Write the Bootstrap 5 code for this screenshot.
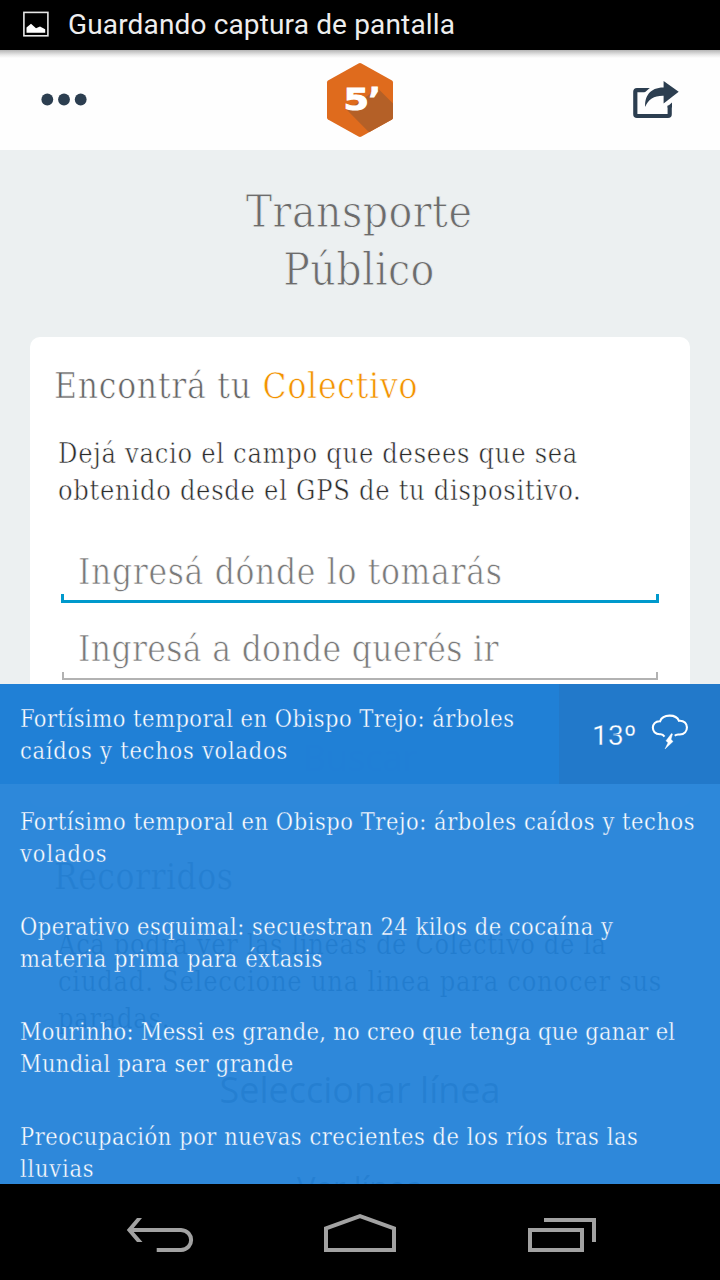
<!DOCTYPE html>
<html lang="es">
<head>
<meta charset="utf-8">
<meta name="viewport" content="width=device-width, initial-scale=1">
<title>Transporte Público</title>
<link rel="stylesheet" href="https://cdn.jsdelivr.net/npm/bootstrap@5.3.0/dist/css/bootstrap.min.css">
<style>
  body { background: #000; font-family: "DejaVu Serif Condensed", "DejaVu Serif", serif; }
  .phone { width: 720px; height: 1280px; }
  .status-bar { height: 50px; background: #000; color: #eee; font: 28px/50px Roboto, sans-serif; padding-left: 22px; letter-spacing: .15px; }
  .app-header { height: 100px; background: linear-gradient(#b4b4b4, #e9e9e9 5px, #fefefe 8px); }
  .app-view { background: #ecf0f1; min-height: 0; }
  /* --t is the tracking of a line; the outline in the ground colour gives a light weight */
  .ln { display: block; white-space: nowrap; letter-spacing: var(--t, 0); }
  .page-title { padding: 33px 2px 38px 0; font-size: 44px; line-height: 58px; color: #6c6c6c; font-weight: 400; -webkit-text-stroke: .8px #ecf0f1; }
  .panel-card { margin: 0 30px 20px; padding: 30px 24px 0; border-radius: 10px; background: #fff; }
  .first-card { height: 470px; }
  .card-heading { font-size: 35px; line-height: 39px; margin: 0 0 29px; color: #666; font-weight: 400; -webkit-text-stroke: .6px #fff; }
  .accent { color: #f39200; }
  .card-copy { font-size: 27px; line-height: 37px; margin: 0 0 34px 4px; color: #2c2c2c; -webkit-text-stroke: .5px #fff; }
  .route-card .card-heading, .route-card .card-copy { -webkit-text-stroke-width: .2px; position: relative; top: 1px; }
  .field { position: relative; height: 60px; margin: 0 7px 17px; padding-left: 17px; font-size: 35px; line-height: 58px; color: #7a7a7a; -webkit-text-stroke: .6px #fff; }
  .field::after { content: ""; position: absolute; inset: auto 0 0; height: 9px; border: solid #0099cc; border-width: 0 3px 3px; }
  .field.idle { line-height: 59px; }
  .field.idle::after { border-color: #b2b2b2; border-width: 0 2px 2px; inset: auto 1px 0; height: 8px; }
  .form-action { font: 36px/50px "Open Sans", sans-serif; color: #666; }
  .form-action.small-action { font-size: 31px; }
  .news-panel { position: absolute; left: 0; right: 0; bottom: 96px; height: 500px; overflow: hidden; background: rgba(34,129,216,.945); color: #fff; font-size: 23.4px; line-height: 32px; -webkit-text-stroke: .35px #2e88da; }
  .news-top { height: 100px; background: rgba(32,127,214,.92); -webkit-text-stroke-color: #2180d7; }
  .news-top .headline { padding: 19px 0 0 20px; }
  .weather { width: 161px; background: #2279ca; font: 28px/100px Roboto, sans-serif; padding-left: 33px; -webkit-text-stroke: .3px #2279ca; }
  .weather .ln { padding-top: 3px; }
  .news-list { padding: 22px 0 0 20px; }
  .news-list li { margin-bottom: 41px; }
  .system-nav { height: 96px; background: #000; }
</style>
</head>
<body>
<div class="phone position-relative overflow-hidden d-flex flex-column">
  <div class="status-bar d-flex align-items-center flex-shrink-0">
    <svg width="28" height="28" viewBox="0 0 28 28"><rect x="1.9" y="1.4" width="24" height="23.4" fill="none" stroke="#e8e8e8" stroke-width="1.6"/><path d="M4.500 21.800v-5.300l4.500-3.800 5 4.600 4-1.800 5.200 2.800v3.500z" fill="#fff"/></svg>
    <span style="margin-left:18px">Guardando captura de pantalla</span>
  </div>

  <header class="app-header flex-shrink-0">
    <svg class="d-block" width="720" height="100" viewBox="0 50 720 100">
      <g fill="#2c3e50"><circle cx="47.300" cy="99.500" r="5.900"/><circle cx="64" cy="99.500" r="5.900"/><circle cx="80.700" cy="99.500" r="5.900"/></g>
      <path d="M358.500 63.400Q360 62.600 361.500 63.400L392 80.500Q393 81.200 393 82.500V117.500Q393 118.800 392 119.500L361.500 136.600Q360 137.400 358.500 136.600L328 119.500Q327 118.800 327 117.500V82.500Q327 81.200 328 80.500Z" fill="#df6b1d"/>
      <path d="M347 110 369 132.300 392 119.500Q393 118.800 393 117.500V103.500L377.500 88 362 100Z" fill="#b46027"/>
      <g fill="#fff" stroke="#fff" stroke-width="1" font-family="DejaVu Sans" font-weight="700" font-size="31"><text x="343.500" y="109.500" textLength="25.500" lengthAdjust="spacingAndGlyphs">5</text><text x="368.500" y="110" font-size="32">’</text></g>
      <path d="M651 90.100H637Q635.300 90.100 635.300 91.800V114.300Q635.300 116 637 116H668Q669.700 116 669.700 114.300V105.500" fill="none" stroke="#2c3e50" stroke-width="4.200"/>
      <path d="M667.500 107.500V106.500L672 102.500V107.500Z" fill="#2c3e50"/>
      <path d="M643.500 93.500 649.800 88 653 88 653 93.500Z" fill="#fefefe"/>
      <path d="M663.600 81 678.700 91.700 663.600 103.500V95.800C654 95.600 648.500 99 645.200 107 644.500 96.500 650 87.500 663.600 87.600Z" fill="#2c3e50"/>
    </svg>
  </header>

  <main class="app-view flex-grow-1 overflow-hidden">
    <h1 class="page-title text-center m-0">
      <span class="ln" style="--t:.45px">Transporte</span>
      <span class="ln" style="--t:.4px">Público</span>
    </h1>
    <section class="panel-card first-card">
      <h2 class="card-heading ln" style="--t:.75px">Encontrá tu <span class="accent">Colectivo</span></h2>
      <p class="card-copy"><span class="ln" style="--t:.7px">Dejá vacio el campo que desees que sea</span><span class="ln" style="--t:.7px">obtenido desde el GPS de tu dispositivo.</span></p>
      <div class="field ln" style="--t:.65px">Ingresá dónde lo tomarás</div>
      <div class="field idle ln" style="--t:.34px">Ingresá a donde querés ir</div>
      <div class="form-action text-center" style="padding-top:36px">Buscar</div>
    </section>
    <section class="panel-card route-card">
      <h2 class="card-heading ln" style="--t:.5px">Recorridos</h2>
      <p class="card-copy"><span class="ln" style="--t:.6px">Acá podrá ver las líneas de Colectivo de la</span><span class="ln" style="--t:.76px">ciudad. Seleccione una linea para conocer sus</span><span class="ln" style="--t:.74px">paradas.</span></p>
      <div class="form-action text-center" style="padding-bottom:47px;margin-top:-5px">Seleccionar línea</div>
      <div class="form-action small-action text-center">Ver línea</div>
    </section>
  </main>

  <aside class="news-panel">
    <div class="news-top d-flex justify-content-between">
      <div class="headline"><span class="ln" style="--t:.5px">Fortísimo temporal en Obispo Trejo: árboles</span><span class="ln" style="--t:.77px">caídos y techos volados</span></div>
      <div class="weather d-flex align-items-center"><span class="ln" style="--t:.2px">13º</span>
        <svg style="margin-left:13px" width="40" height="100" viewBox="650 684 40 100"><path d="M664.500 736.500C662.500 733.800 662 734.300 659.800 734.300 650.500 734.300 650.500 720.800 660 721.300 663 713.800 676 713.800 679 720.800 689.500 719.800 689.500 734.800 679.500 734.500 677.500 734.500 676.500 734 674.800 735.800" fill="none" stroke="#fff" stroke-width="2.100"/><path d="M671.500 733.500 666 740.800 668 742.800 665 749 673 741.500 671 739.200 672.500 734Z" fill="#fff" stroke="#fff" stroke-width=".4"/></svg>
      </div>
    </div>
    <ul class="news-list list-unstyled m-0">
      <li><span class="ln" style="--t:.55px">Fortísimo temporal en Obispo Trejo: árboles caídos y techos</span><span class="ln" style="--t:.95px">volados</span></li>
      <li><span class="ln" style="--t:.49px">Operativo esquimal: secuestran 24 kilos de cocaína y</span><span class="ln" style="--t:.58px">materia prima para éxtasis</span></li>
      <li><span class="ln" style="--t:.27px">Mourinho: Messi es grande, no creo que tenga que ganar el</span><span class="ln" style="--t:.34px">Mundial para ser grande</span></li>
      <li><span class="ln" style="--t:.54px">Preocupación por nuevas crecientes de los ríos tras las</span><span class="ln" style="--t:.75px">lluvias</span></li>
    </ul>
  </aside>

  <nav class="system-nav flex-shrink-0">
    <svg class="d-block" width="720" height="96" viewBox="0 1184 720 96" fill="none" stroke="#a2a2a2" stroke-width="4">
      <path d="M130 1230H181C194.500 1231 194.500 1249 181 1250H156.700"/><path d="M142 1218H137L126.800 1230 137 1242H142.500L132 1230Z" fill="#a2a2a2" stroke="none"/>
      <path d="M326 1228.400 360 1216.200 394 1228.400V1250H326Z"/>
      <path d="M530 1230H582V1250H530ZM544 1220H594V1242"/>
    </svg>
  </nav>
</div>
<script src="https://cdn.jsdelivr.net/npm/bootstrap@5.3.0/dist/js/bootstrap.bundle.min.js"></script>
</body>
</html>
